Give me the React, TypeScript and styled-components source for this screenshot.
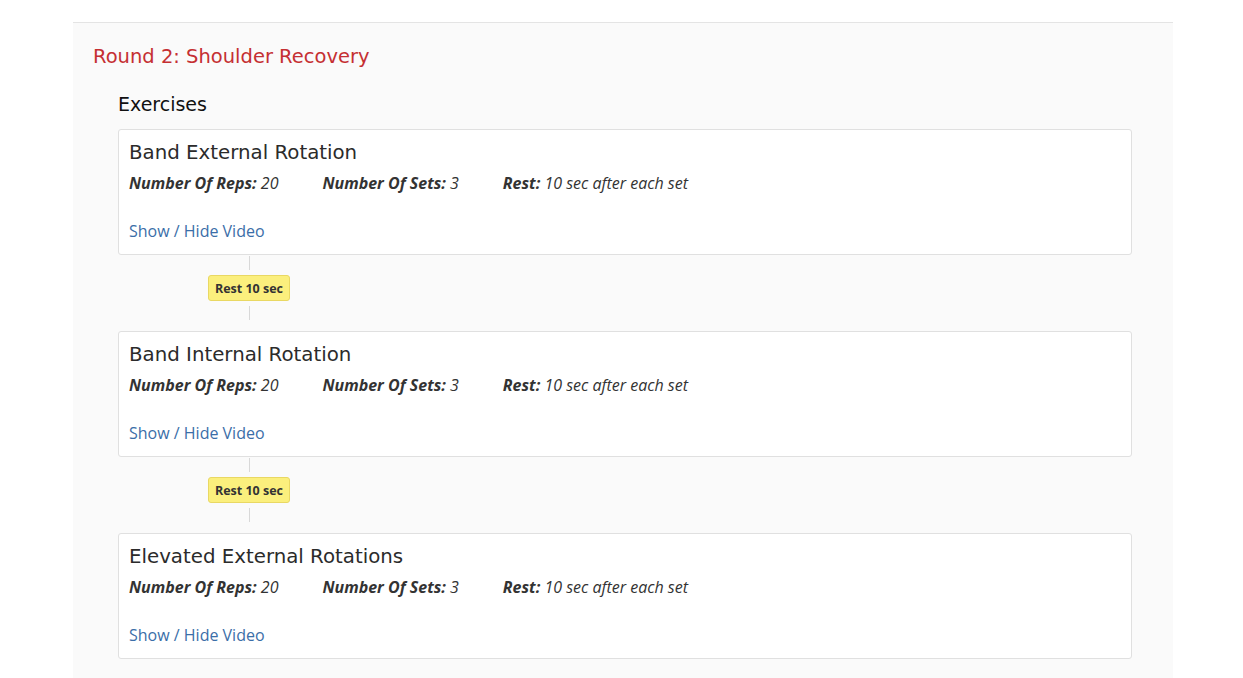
import styled, { createGlobalStyle } from 'styled-components';

const GlobalStyle = createGlobalStyle`
    body {
        margin: 0;
        background: #ffffff;
        font-family: "Open Sans", "Liberation Sans", sans-serif;
        color: #333333;
    }
`;

interface IExercise {
    name: string;
    reps: number;
    sets: number;
    rest: string;
}

const exercises: IExercise[] = [
    { name: 'Band External Rotation', reps: 20, sets: 3, rest: '10 sec after each set' },
    { name: 'Band Internal Rotation', reps: 20, sets: 3, rest: '10 sec after each set' },
    { name: 'Elevated External Rotations', reps: 20, sets: 3, rest: '10 sec after each set' },
];

const App = () => {
    return (<Page>
        <GlobalStyle />
        <Panel>
            <RoundTitle>Round 2: Shoulder Recovery</RoundTitle>
            <ExerciseList>
                <SectionTitle>Exercises</SectionTitle>
                {exercises.map((exercise, i) => (
                    <div key={exercise.name}>
                        {i > 0 && (
                            <Connector>
                                <ConnectorLine />
                                <RestBadge>Rest 10 sec</RestBadge>
                                <ConnectorLine />
                            </Connector>
                        )}
                        <Card>
                            <CardTitle>{exercise.name}</CardTitle>
                            <MetaRow>
                                <MetaItem><b>Number Of Reps:</b> {exercise.reps}</MetaItem>
                                <MetaItem><b>Number Of Sets:</b> {exercise.sets}</MetaItem>
                                <MetaItem><b>Rest:</b> {exercise.rest}</MetaItem>
                            </MetaRow>
                            <VideoLink href="#">Show / Hide Video</VideoLink>
                        </Card>
                    </div>
                ))}
            </ExerciseList>
        </Panel>
    </Page>);
};

const Page = styled.div`
    padding-top: 22px;
    min-height: 656px;
`;

const Panel = styled.div`
    margin-left: 73px;
    width: 1100px;
    min-height: 656px;
    box-sizing: border-box;
    background: #fafafa;
    border-top: 1px solid #e4e4e4;
    padding: 22px 41px 20px 20px;
`;

const RoundTitle = styled.h2`
    margin: 0;
    font-family: "DejaVu Sans", "Noto Sans", sans-serif;
    font-weight: normal;
    font-size: 19.5px;
    line-height: 24px;
    color: #c52f32;
`;

const ExerciseList = styled.div`
    margin-left: 25px;
    margin-top: 23px;
`;

const SectionTitle = styled.h3`
    margin: 0 0 13px 0;
    font-family: "DejaVu Sans", "Noto Sans", sans-serif;
    font-weight: normal;
    font-size: 19px;
    line-height: 24px;
    color: #111111;
`;

const Card = styled.div`
    background: #ffffff;
    border: 1px solid #e0e0e0;
    border-radius: 3px;
    padding: 11px 10px 12px 10px;
`;

const CardTitle = styled.div`
    font-family: "DejaVu Sans", "Noto Sans", sans-serif;
    font-size: 19.8px;
    line-height: 24px;
    color: #2b2b2b;
`;

const MetaRow = styled.div`
    display: flex;
    gap: 44px;
    margin-top: 7px;
    font-size: 16px;
    line-height: 22px;
    font-style: italic;
    color: #333333;

    b {
        font-weight: 700;
    }
`;

const MetaItem = styled.span``;

const VideoLink = styled.a`
    display: inline-block;
    margin-top: 26px;
    font-size: 16px;
    line-height: 22px;
    color: #3b6ea8;
    text-decoration: none;
`;

const Connector = styled.div`
    display: flex;
    flex-direction: column;
    align-items: center;
    width: 84px;
    margin-left: 89px;
    padding: 1px 0 11px 0;
    gap: 5px;
`;

const ConnectorLine = styled.div`
    width: 1px;
    height: 14px;
    background: #d8d8d8;
`;

const RestBadge = styled.div`
    box-sizing: border-box;
    height: 26px;
    padding: 0 6px;
    display: flex;
    align-items: center;
    background: #fbef7d;
    border: 1px solid #e9d863;
    border-radius: 3px;
    font-size: 12.5px;
    font-weight: 700;
    color: #333333;
    white-space: nowrap;
`;

export default App;
